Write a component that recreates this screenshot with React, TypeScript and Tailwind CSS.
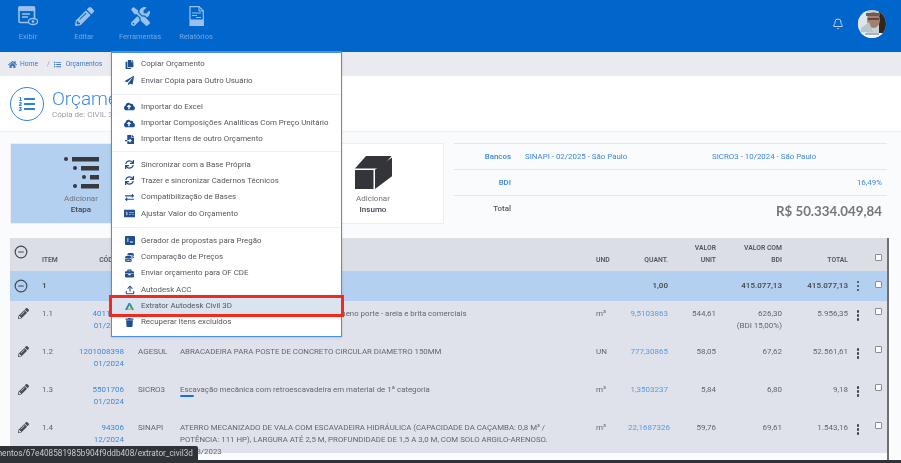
import { Bell, CircleMinus, Upload } from 'lucide-react';
import {
  FaBriefcase, FaCloudUploadAlt, FaCoins, FaCopy, FaExchangeAlt, FaFileImport, FaHome,
  FaList, FaListOl, FaMoneyCheckAlt, FaPaperPlane, FaPencilAlt, FaSync, FaTools, FaTrash,
} from 'react-icons/fa';

const ROW = 'grid grid-cols-[32px_30px_52px_56px_416px_32px_40px_48px_66px_66px_20px_20px_1px] text-[8px] leading-[12px]';

function ExibirIcon() {
  return (
    <svg width="20" height="20" viewBox="0 0 20 20" fill="none" stroke="currentColor">
      <rect x="1" y="1" width="15.5" height="15.5" rx="1" strokeWidth="1.6" />
      <rect x="1" y="1" width="15.5" height="3.6" fill="currentColor" />
      <path d="M4 8h8M4 11h6" strokeWidth="1.3" />
      <ellipse cx="15" cy="15.5" rx="4.6" ry="3" fill="#0066cc" strokeWidth="1.3" />
      <circle cx="15" cy="15.5" r="1.3" fill="currentColor" stroke="none" />
    </svg>
  );
}

function RelatoriosIcon() {
  return (
    <svg width="15" height="20" viewBox="0 0 15 20" fill="none" stroke="currentColor">
      <path d="M1 .7h9l4.3 4.3v14.3H1z" strokeWidth="1.2" />
      <path d="M10 .7V5h4.3" strokeWidth="1" />
      <path d="M3 7h9M3 9.5h5M7 11.5h5" strokeWidth="1" />
      <rect x="1" y="13.5" width="13.3" height="5.8" fill="currentColor" stroke="none" />
    </svg>
  );
}

function EtapaIcon() {
  const rows = [
    { dot: 3, bar: 12, w: 27 },
    { dot: 12, bar: 21, w: 18 },
    { dot: 21, bar: 30, w: 9 },
    { dot: 12, bar: 21, w: 18 },
  ];
  return (
    <svg width="37" height="33" viewBox="0 0 37 33" fill="#37393f">
      {rows.map((r, i) => (
        <g key={i}>
          <circle cx={r.dot} cy={3 + i * 9} r="2" />
          <rect x={r.bar - 3} y={1 + i * 9} width={r.w} height="4.5" />
        </g>
      ))}
    </svg>
  );
}

function BlockIcon() {
  return (
    <svg width="37" height="33" viewBox="0 0 37 33" fill="#33353b">
      <path d="M0 12.5 11 0h25.5L26 12.5z" />
      <path d="M0 14h18.5v19H0z" />
      <path d="M20 13.8 37 1.5v18.8L20 33z" />
    </svg>
  );
}

function AcaIcon() {
  return (
    <svg width="9" height="9" viewBox="0 0 10 10">
      <path d="M0 9 4 1h2L2.5 9z" fill="#2f7fd0" />
      <path d="M6 1l4 8H7.5L5 4z" fill="#2f9e6e" />
      <path d="M3 9l1-2h3l1 2z" fill="#e8b13a" />
    </svg>
  );
}

function GeradorIcon() {
  return (
    <svg width="10" height="9" viewBox="0 0 10 9">
      <rect width="10" height="9" rx="1" fill="#1f4f8f" />
      <path d="M2 3h1.6M2 5h1.6M5 6h3" stroke="#fff" strokeWidth="1" />
    </svg>
  );
}

function Avatar() {
  return (
    <svg width="28" height="28" viewBox="0 0 28 28">
      <defs>
        <clipPath id="avatar-clip"><circle cx="14" cy="14" r="14" /></clipPath>
      </defs>
      <g clipPath="url(#avatar-clip)">
        <rect width="28" height="28" fill="#c9d2d6" />
        <rect x="0" width="9" height="24" fill="#dfe6e8" />
        <rect x="21" width="7" height="24" fill="#33261f" />
        <ellipse cx="15.5" cy="10" rx="6.5" ry="8" fill="#a5806e" />
        <path d="M10 8h11v2H10z" fill="#5c4a44" />
        <path d="M8 3h14v3H8z" fill="#6d5c52" />
        <path d="M3 18l8-6 4 10H3z" fill="#b9c6cc" />
        <rect y="23" width="28" height="5" fill="#f4f6f7" />
        <path d="M7 24h14" stroke="#5d7486" strokeWidth="1.2" />
      </g>
    </svg>
  );
}

const tools = [
  { label: 'Exibir', icon: <ExibirIcon /> },
  { label: 'Editar', icon: <FaPencilAlt size={19} /> },
  { label: 'Ferramentas', icon: <FaTools size={19} /> },
  { label: 'Relatórios', icon: <RelatoriosIcon /> },
];

const menuGroups = [
  {
    gap: '',
    items: [
      { label: 'Copiar Orçamento', icon: <FaCopy size={9} /> },
      { label: 'Enviar Cópia para Outro Usuário', icon: <FaPaperPlane size={9} /> },
    ],
  },
  {
    gap: 'mt-[5px] pt-[4px]',
    items: [
      { label: 'Importar do Excel', icon: <FaCloudUploadAlt size={11} /> },
      { label: 'Importar Composições Analíticas Com Preço Unitário', icon: <FaCloudUploadAlt size={11} /> },
      { label: 'Importar Itens de outro Orçamento', icon: <FaFileImport size={9} /> },
    ],
  },
  {
    gap: 'mt-[4px] pt-[4px]',
    items: [
      { label: 'Sincronizar com a Base Própria', icon: <FaSync size={9} /> },
      { label: 'Trazer e sincronizar Cadernos Técnicos', icon: <FaSync size={9} /> },
      { label: 'Compatibilização de Bases', icon: <FaExchangeAlt size={9} /> },
      { label: 'Ajustar Valor do Orçamento', icon: <FaMoneyCheckAlt size={11} /> },
    ],
  },
  {
    gap: 'mt-[5px] pt-[5px]',
    items: [
      { label: 'Gerador de propostas para Pregão', icon: <GeradorIcon /> },
      { label: 'Comparação de Preços', icon: <FaCoins size={9} /> },
      { label: 'Enviar orçamento para OF CDE', icon: <FaBriefcase size={9} /> },
      { label: 'Autodesk ACC', icon: <Upload size={10} strokeWidth={2.5} /> },
      { label: 'Extrator Autodesk Civil 3D', icon: <AcaIcon />, active: true },
      { label: 'Recuperar Itens excluídos', icon: <FaTrash size={9} /> },
    ],
  },
];

const rows = [
  { item: '1.1', code: '4011223', date: '01/2024', bank: 'SINAPI', desc: <>Argamassa traço 1:3 preparo betoneira de pequeno porte - areia e brita comerciais</>, und: 'm³', quant: '9,5103863', unit: '544,61', bdi: '626,30', note: '(BDI 15,00%)', total: '5.956,35' },
  { item: '1.2', code: '1201008398', date: '01/2024', bank: 'AGESUL', desc: <>ABRACADEIRA PARA POSTE DE CONCRETO CIRCULAR DIAMETRO 150MM</>, und: 'UN', quant: '777,30865', unit: '58,05', bdi: '67,62', total: '52.561,61' },
  { item: '1.3', code: '5501706', date: '01/2024', bank: 'SICRO3', desc: <>Escavação mecânica com retroescavadeira em material de 1ª categoria<div className="mt-[-1px] h-[2px] w-[14px] rounded-full bg-[#1a6fe0]" /></>, und: 'm³', quant: '1,3503237', unit: '5,84', bdi: '6,80', total: '9,18' },
  { item: '1.4', code: '94306', date: '12/2024', bank: 'SINAPI', desc: <>ATERRO MECANIZADO DE VALA COM ESCAVADEIRA HIDRÁULICA (CAPACIDADE DA CAÇAMBA: 0,8 M³ / POTÊNCIA: 111 HP), LARGURA ATÉ 2,5 M, PROFUNDIDADE DE 1,5 A 3,0 M, COM SOLO ARGILO-ARENOSO.<div>08/08/2023</div></>, und: 'm³', quant: '22,1687326', unit: '59,76', bdi: '69,61', total: '1.543,16' },
];

function Dots() {
  return (
    <div className="flex flex-col items-center gap-[1.5px]">
      <span className="size-[2.5px] rounded-full bg-[#3c3f46]" />
      <span className="size-[2.5px] rounded-full bg-[#3c3f46]" />
      <span className="size-[2.5px] rounded-full bg-[#3c3f46]" />
    </div>
  );
}

function Check() {
  return <span className="block size-[7px] rounded-[1px] border border-[#8a8d94] bg-white" />;
}

function Card({ title, icon, active }: { title: string; icon: React.ReactNode; active?: boolean }) {
  return (
    <div className={`flex w-[142px] flex-col items-center border border-[#eceef3] pt-[12px] ${active ? 'bg-[#b3d0f0]' : 'bg-white'}`}>
      {icon}
      <span className="mt-[4px] text-[8px] leading-[11px] text-[#6f7278]">Adicionar</span>
      <span className="text-[8px] leading-[12px] font-medium text-[#45484e]">{title}</span>
    </div>
  );
}

export default function App() {
  return (
    <div className="relative flex h-[463px] w-[901px] flex-col overflow-hidden bg-[#fafbfd] font-['Roboto',sans-serif] blur-[0.35px]">
      <header className="flex h-[52px] shrink-0 items-start bg-[#0066cc] text-[#9cc0ea]">
        {tools.map(t => (
          <div key={t.label} className="flex h-[52px] w-[56px] flex-col items-center pt-[6px]">
            <div className="flex h-[20px] items-center">{t.icon}</div>
            <span className="mt-[5px] text-[7.5px] leading-[11px] whitespace-nowrap text-[#74a7e2]">{t.label}</span>
          </div>
        ))}
        <div className="ml-auto flex items-center gap-[14px] pt-[10px] pr-[15px]">
          <Bell size={12} className="mt-[-1px] text-[#b9d3f2]" />
          <Avatar />
        </div>
      </header>

      <nav className="flex h-[24px] shrink-0 items-center bg-[#e9ebf1] pl-[8px] text-[6.7px] text-[#3f78bd]">
        <FaHome size={9} />
        <span className="ml-[3px]">Home</span>
        <span className="ml-[9px] text-[#8d99ab]">/</span>
        <FaList size={7} className="ml-[4px]" />
        <span className="ml-[5px]">Orçamentos</span>
      </nav>

      <section className="flex h-[56px] shrink-0 items-start border-b border-[#eef0f4] bg-white pt-[11px] pl-[10px]">
        <div className="flex size-[34px] items-center justify-center rounded-full border-[1.5px] border-[#3485dc] text-[#2f80da]">
          <FaListOl size={16} />
        </div>
        <div className="ml-[8px]">
          <h1 className="text-[19px] leading-[23px] font-light text-[#3d8be0]">Orçamento</h1>
          <p className="text-[8px] leading-[9px] text-[#9a9da6]">Cópia de: CIVIL 3D</p>
        </div>
      </section>

      <section className="mt-[11px] flex h-[81px] shrink-0 pl-[10px]">
        <div className="flex gap-[4px]">
          <Card title="Etapa" icon={<EtapaIcon />} active />
          <Card title="Composição" icon={<BlockIcon />} />
          <Card title="Insumo" icon={<BlockIcon />} />
        </div>
        <div className="ml-[10px] w-[433px] text-[7.9px] text-[#3c87db]">
          <div className="flex h-[26px] items-center border-t border-[#e4e6ec]">
            <span className="w-[57px] text-right font-medium">Bancos</span>
            <span className="ml-[14px] w-[187px]">SINAPI - 02/2025 - São Paulo</span>
            <span>SICRO3 - 10/2024 - São Paulo</span>
          </div>
          <div className="flex h-[26px] items-center justify-between border-t border-[#e4e6ec] pr-[5px]">
            <span className="w-[57px] text-right font-medium">BDI</span>
            <span>16,49%</span>
          </div>
          <div className="flex h-[29px] items-start justify-between border-t border-[#e4e6ec] pr-[5px]">
            <span className="mt-[7px] w-[57px] text-right font-medium text-[#55585e]">Total</span>
            <span className="mt-[5px] font-['Lato',sans-serif] text-[13.3px] leading-[20px] font-bold text-[#74777d]">R$ 50.334.049,84</span>
          </div>
        </div>
      </section>

      <section className="mx-[10px] mt-[14px] min-h-0 w-[879px] flex-1 overflow-hidden border-r-2 border-[#6c6f76] text-[#63666d]">
        <div className={`${ROW} h-[33px] items-end bg-[#dcdee6] pb-[5px] !text-[6.8px] font-semibold text-[#53565d]`}>
          <div className="self-center pl-[4px]"><CircleMinus size={14} className="text-[#44474e]" /></div>
          <div>ITEM</div>
          <div className="text-right">CÓDIGO</div>
          <div className="pl-[14px]">BANCO</div>
          <div>DESCRIÇÃO</div>
          <div>UND</div>
          <div className="text-right">QUANT.</div>
          <div className="text-right">VALOR<br />UNIT</div>
          <div className="text-right">VALOR COM<br />BDI</div>
          <div className="text-right">TOTAL</div>
          <div />
          <div className="flex justify-center pb-[5px]"><Check /></div>
        </div>

        <div className={`${ROW} h-[30px] items-center bg-[#b3d0f0] font-semibold text-[#4a4d54]`}>
          <div className="pl-[4px]"><CircleMinus size={14} className="text-[#44474e]" /></div>
          <div>1</div>
          <div />
          <div />
          <div />
          <div />
          <div className="text-right">1,00</div>
          <div />
          <div className="text-right">415.077,13</div>
          <div className="text-right">415.077,13</div>
          <div className="flex justify-center"><Dots /></div>
          <div className="flex justify-center pb-[3px]"><Check /></div>
        </div>

        {rows.map(r => (
          <div key={r.item} className={`${ROW} h-[38px] bg-[#dfe2ea] pt-[7px]`}>
            <div className="pl-[8px] text-[#4a4d54]"><FaPencilAlt size={11} /></div>
            <div>{r.item}</div>
            <div className="text-right whitespace-nowrap text-[#3f88d8]">
              <div className="flex justify-end">{r.code}</div>
              {r.date}
            </div>
            <div className="pl-[14px]">{r.bank}</div>
            <div className="w-[372px] text-[7.85px]">{r.desc}</div>
            <div>{r.und}</div>
            <div className="text-right text-[#5a9ce0]">{r.quant}</div>
            <div className="text-right">{r.unit}</div>
            <div className="text-right whitespace-nowrap">
              {r.bdi}
              {r.note && <div>{r.note}</div>}
            </div>
            <div className="text-right">{r.total}</div>
            <div className="flex justify-center pt-[2px]"><Dots /></div>
            <div className="flex justify-center"><Check /></div>
          </div>
        ))}
      </section>

      <div className="h-[3px] shrink-0 bg-[#2f3237]" />

      <div className="absolute top-[51px] left-[111px] w-[231px] border border-t-2 border-[#4a8fe0] bg-white pt-[3px] pb-[6px] text-[7.9px] text-[#53565d] shadow-sm">
        {menuGroups.map((group, i) => (
          <div key={i} className={i ? `border-t border-[#eef0f3] ${group.gap}` : ''}>
            {group.items.map(m => (
              <div key={m.label} className={`flex h-[16.3px] items-center ${m.active ? 'bg-[#d9e4f0] outline-[3px] outline-[#f5291b]' : ''}`}>
                <span className="flex w-[29px] shrink-0 justify-center pl-[6px] text-[#1f4f8f]">{m.icon}</span>
                <span className="whitespace-nowrap">{m.label}</span>
              </div>
            ))}
          </div>
        ))}
      </div>

      <div className="absolute top-[446px] left-0 flex h-[15px] w-[198px] items-center justify-end overflow-hidden rounded-tr-[2px] bg-[#2f3237] pr-[5px] text-[8.2px] whitespace-nowrap text-[#c9ccd1]">
        mentos/67e408581985b904f9ddb408/extrator_civil3d
      </div>
    </div>
  );
}
